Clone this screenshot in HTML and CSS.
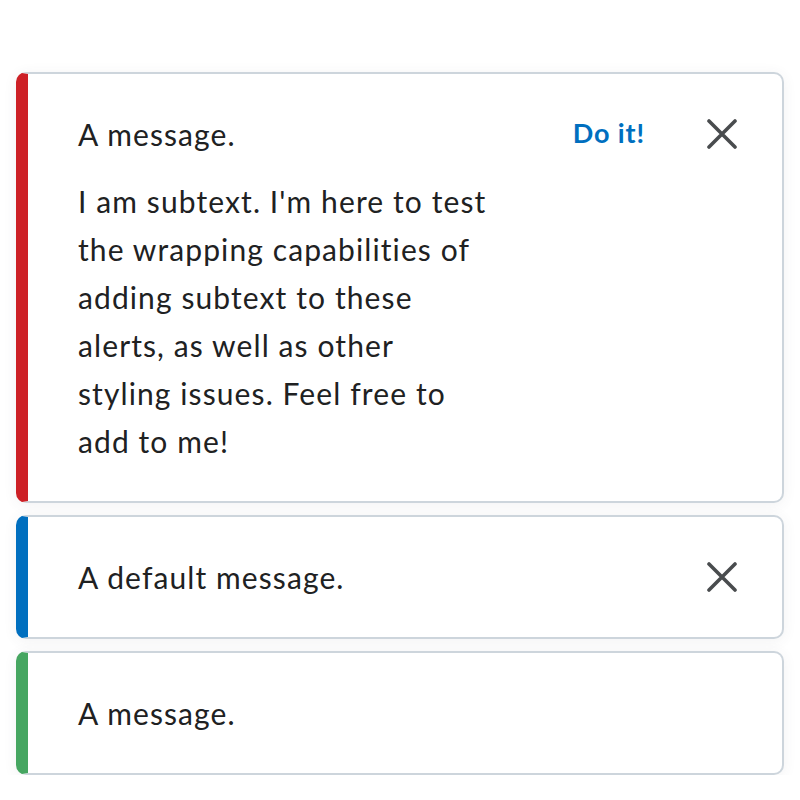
FILE: index.html
```html
<!DOCTYPE html>
<html lang="en">
<head>
<meta charset="utf-8">
<title>Alerts</title>
<link rel="stylesheet" href="styles.css">
</head>
<body>
<main class="stack">
  <section class="alert alert-critical">
    <div class="body">
      <p class="title">A message.</p>
      <p class="sub">I am subtext. I'm here to test the wrapping capabilities of adding subtext to these alerts, as well as other styling issues. Feel free to add to me!</p>
    </div>
    <button class="action" type="button">Do it!</button>
    <button class="close" type="button" aria-label="Close">
      <svg viewBox="0 0 30 30" width="30" height="30"><path d="M2 2 L28 28 M28 2 L2 28" stroke="#494c4e" stroke-width="3.6" stroke-linecap="round" fill="none"/></svg>
    </button>
  </section>
  <section class="alert alert-default">
    <div class="body">
      <p class="title">A default message.</p>
    </div>
    <button class="close" type="button" aria-label="Close">
      <svg viewBox="0 0 30 30" width="30" height="30"><path d="M2 2 L28 28 M28 2 L2 28" stroke="#494c4e" stroke-width="3.6" stroke-linecap="round" fill="none"/></svg>
    </button>
  </section>
  <section class="alert alert-success">
    <div class="body">
      <p class="title">A message.</p>
    </div>
  </section>
</main>
</body>
</html>
```
FILE: styles.css
```css
html, body {
  margin: 0;
  padding: 0;
  background: #ffffff;
}
body {
  font-family: Lato, "Noto Sans", sans-serif;
  color: #202122;
}
.stack {
  display: flex;
  flex-direction: column;
  gap: 12px;
  padding: 72px 16px 0 16px;
}
.alert {
  display: flex;
  align-items: flex-start;
  background: #ffffff;
  border: 2px solid #cdd5dc;
  border-left: 12px solid #cd2026;
  border-radius: 10px;
  box-shadow: 0 2px 14px rgba(73, 76, 78, 0.07);
  padding: 36px 0 36px 50px;
}
.alert-critical { border-left-color: #cd2026; }
.alert-default { border-left-color: #006fbf; }
.alert-success { border-left-color: #46a661; }
.body {
  flex: 1 1 auto;
}
.title {
  margin: 0;
  font-size: 30px;
  line-height: 48px;
  letter-spacing: 1.1px;
}
.sub {
  margin: 19px 0 0 0;
  font-size: 30px;
  line-height: 48px;
  letter-spacing: 1.1px;
  max-width: 411px;
}
.action {
  font-family: Lato, "Noto Sans", sans-serif;
  font-weight: 700;
  font-size: 27px;
  letter-spacing: 0.9px;
  color: #006fbf;
  background: none;
  border: 0;
  padding: 0;
  line-height: 46px;
  margin: 0 62px 0 0;
  cursor: pointer;
}
.close {
  background: none;
  border: 0;
  padding: 0;
  width: 30px;
  height: 48px;
  display: flex;
  align-items: center;
  justify-content: center;
  margin-right: 45px;
  cursor: pointer;
}
```
